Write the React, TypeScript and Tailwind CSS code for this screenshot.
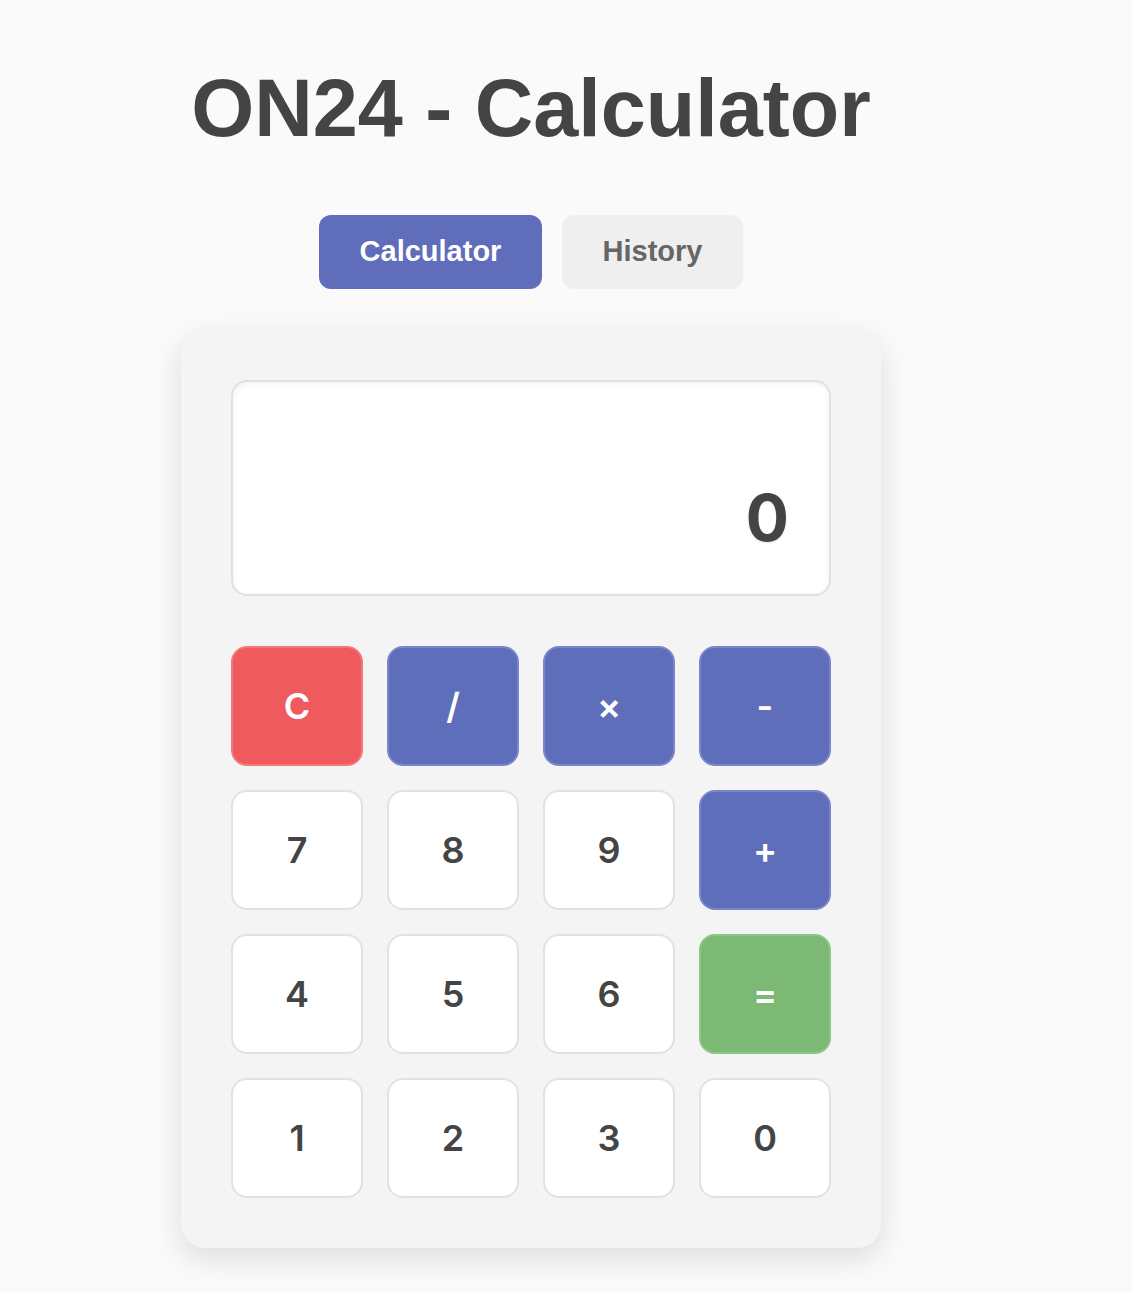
const keys: { label: string; kind: "clear" | "op" | "num" | "eq" }[] = [
  { label: "C", kind: "clear" },
  { label: "/", kind: "op" },
  { label: "×", kind: "op" },
  { label: "-", kind: "op" },
  { label: "7", kind: "num" },
  { label: "8", kind: "num" },
  { label: "9", kind: "num" },
  { label: "+", kind: "op" },
  { label: "4", kind: "num" },
  { label: "5", kind: "num" },
  { label: "6", kind: "num" },
  { label: "=", kind: "eq" },
  { label: "1", kind: "num" },
  { label: "2", kind: "num" },
  { label: "3", kind: "num" },
  { label: "0", kind: "num" },
];

const keyStyles = {
  clear: "bg-[#ef5a5f] border-[#f2787c] text-white",
  op: "bg-[#5f6eba] border-[#7a86cb] text-white",
  num: "bg-white border-[#e2e2e2] text-[#444]",
  eq: "bg-[#7bb974] border-[#8cc586] text-white",
};

function Key({ label, kind }: { label: string; kind: keyof typeof keyStyles }) {
  return (
    <button
      className={`flex h-[120px] w-[132px] items-center justify-center rounded-2xl border-2 text-[36px] font-semibold ${keyStyles[kind]}`}
    >
      {label}
    </button>
  );
}

export default function App() {
  return (
    <div className="min-h-[1292px] w-full bg-[#fafafa] font-['Liberation_Sans',Arial,sans-serif]">
      <div className="flex w-[1062px] flex-col items-center pt-[68px] pb-[44px]">
        <h1 className="text-[81px] font-bold leading-[80px] text-[#444]">ON24 - Calculator</h1>

        <div className="mt-[67px] flex gap-5">
          <button className="flex h-[74px] w-[223px] items-center justify-center rounded-xl bg-[#5f6dba] text-[29px] font-bold text-white">
            Calculator
          </button>
          <button className="flex h-[74px] w-[181px] items-center justify-center rounded-xl bg-[#efefef] text-[29px] font-bold text-[#666]">
            History
          </button>
        </div>

        <div className="mt-[41px] w-[700px] rounded-3xl bg-[#f4f4f4] p-[50px] shadow-[0_10px_30px_rgba(0,0,0,0.12)] font-['Inter',sans-serif]">
          <div className="flex h-[216px] flex-col items-end justify-end rounded-2xl border-2 border-[#e0e0e0] bg-white px-10 pb-[44px] shadow-[inset_0_2px_6px_rgba(0,0,0,0.06)]">
            <span className="text-[64px] font-bold leading-none text-[#444] [text-shadow:0_1px_2px_rgba(0,0,0,0.12)]">
              0
            </span>
          </div>

          <div className="mt-[50px] grid grid-cols-4 gap-6">
            {keys.map((k) => (
              <Key key={k.label} label={k.label} kind={k.kind} />
            ))}
          </div>
        </div>
      </div>
    </div>
  );
}
